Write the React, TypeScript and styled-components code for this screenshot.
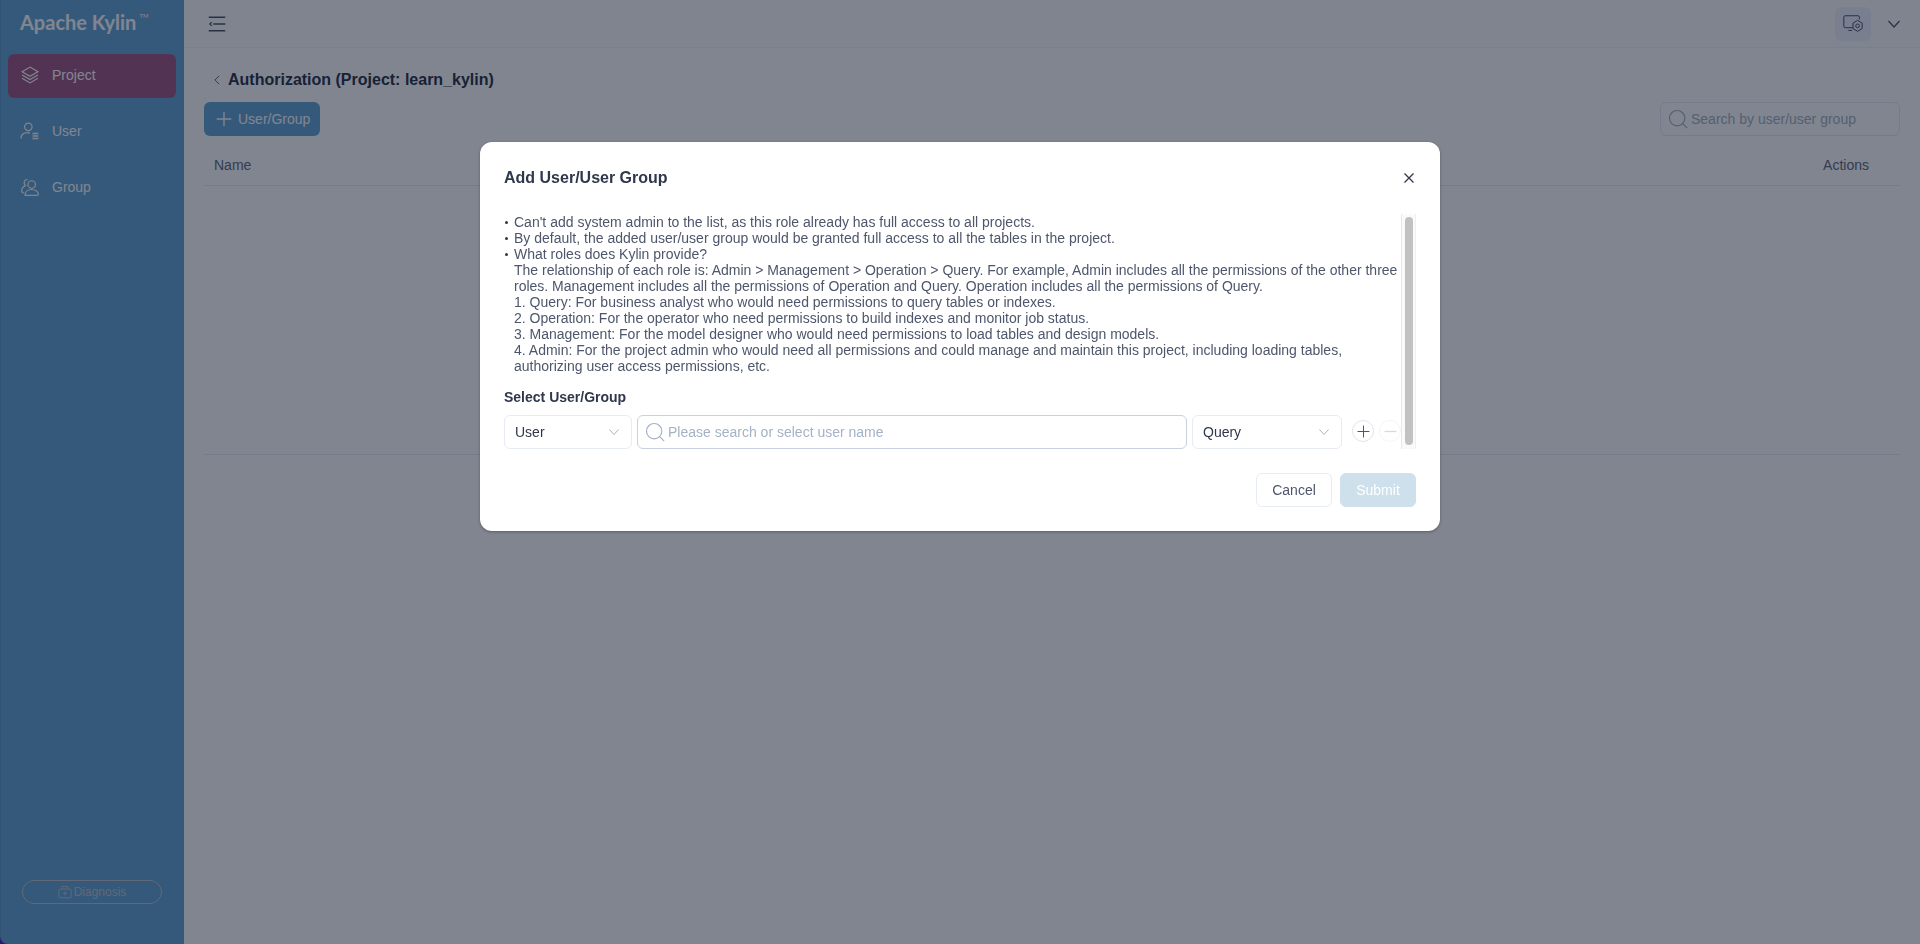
import type { ReactNode } from "react";
import styled, { createGlobalStyle } from "styled-components";

const GlobalStyle = createGlobalStyle`
  html, body {
    margin: 0;
    padding: 0;
    height: 100%;
    background: #ffffff;
    font-family: "Liberation Sans", Arial, sans-serif;
  }
  * {
    box-sizing: border-box;
  }
`;

const Layout = styled.div`
  display: flex;
  width: 100%;
  height: 944px;
  overflow: hidden;
  background: #4a2fc0;
`;

const Sidebar = styled.aside`
  width: 184px;
  flex: none;
  display: flex;
  flex-direction: column;
  background: #67a7d7;
  padding: 0 8px 40px;
  border-left: 1px solid #5f9ccb;
  border-bottom-left-radius: 8px;
`;

const Logo = styled.div`
  height: 54px;
  padding: 9px 0 0 11px;
  font-family: Lato, sans-serif;
  font-weight: 700;
  font-size: 20px;
  line-height: 26px;
  color: #ffffff;
  sup {
    font-size: 6px;
    font-weight: 400;
    line-height: 0;
    vertical-align: 12px;
    margin-left: 3px;
  }
`;

const Nav = styled.nav`
  display: flex;
  flex-direction: column;
  gap: 12px;
  margin-left: -1px;
`;

const NavItem = styled.div<{ $active?: boolean }>`
  height: 44px;
  display: flex;
  align-items: center;
  gap: 12px;
  padding: 0 12px 2px;
  border-radius: 6px;
  font-size: 14px;
  color: #ffffff;
  background: ${(p) => (p.$active ? "#a15b87" : "transparent")};
`;

const Diagnosis = styled.div`
  margin: auto 14px 0 13px;
  height: 24px;
  border: 1px solid #c0c4cc;
  border-radius: 12px;
  display: flex;
  align-items: center;
  justify-content: center;
  gap: 2px;
  font-size: 12px;
  color: #c0c4cc;
`;

const Main = styled.main`
  flex: 1;
  min-width: 0;
  display: flex;
  flex-direction: column;
  background: #ffffff;
`;

const TopBar = styled.header`
  height: 48px;
  flex: none;
  display: flex;
  align-items: center;
  justify-content: space-between;
  padding: 0 20px 0 24px;
  background: #fcfcfc;
  border-bottom: 1px solid #f0f2f5;
`;

const TopActions = styled.div`
  display: flex;
  align-items: center;
  gap: 17px;
`;

const SystemButton = styled.div`
  width: 36px;
  height: 34px;
  display: flex;
  align-items: center;
  justify-content: center;
  border-radius: 6px;
  background: #eff3ff;
`;

const Content = styled.section`
  padding: 0 20px;
`;

const TitleRow = styled.div`
  height: 54px;
  padding: 9px 0 0 8px;
  display: flex;
  align-items: center;
  gap: 6px;
`;

const PageTitle = styled.h1`
  margin: 0;
  font-size: 16px;
  font-weight: 700;
  color: #2f374c;
`;

const Toolbar = styled.div`
  display: flex;
  justify-content: space-between;
  align-items: center;
`;

const PrimaryButton = styled.div`
  width: 116px;
  height: 34px;
  padding: 0 0 0 12px;
  display: flex;
  align-items: center;
  gap: 6px;
  border-radius: 6px;
  background: #67a7d7;
  color: #ffffff;
  font-size: 14px;
`;

const SearchBox = styled.div<{ $width?: string; $strong?: boolean }>`
  height: 34px;
  display: flex;
  align-items: center;
  gap: 3px;
  padding: 0 7px;
  border: 1px solid ${(p) => (p.$strong ? "#c9d1e0" : "#e6ebf4")};
  border-radius: 6px;
  background: #ffffff;
  font-size: 14px;
  color: #a5b2c5;
  width: ${(p) => p.$width ?? "auto"};
  flex: ${(p) => (p.$width ? "none" : "1")};
`;

const TableHead = styled.div`
  height: 50px;
  padding: 9px 31px 0 10px;
  display: flex;
  justify-content: space-between;
  align-items: center;
  font-size: 14px;
  color: #636c83;
  border-bottom: 1px solid #e6ebf4;
`;

const TableBody = styled.div`
  height: 269px;
  border-bottom: 1px solid #e6ebf4;
`;

const Overlay = styled.div`
  position: fixed;
  inset: 0;
  background: rgba(3, 11, 31, 0.5);
`;

const Modal = styled.div`
  width: 960px;
  height: 389px;
  margin: 142px auto 0;
  padding: 24px 24px 0;
  background: #ffffff;
  border-radius: 12px;
  box-shadow: 0 1px 3px rgba(0, 0, 0, 0.3);
  display: flex;
  flex-direction: column;
`;

const ModalHead = styled.div`
  height: 48px;
  flex: none;
  padding-top: 1px;
  display: flex;
  justify-content: space-between;
  color: #2f374c;
`;

const ModalTitle = styled.h2`
  margin: 0;
  font-size: 16px;
  line-height: 22px;
  font-weight: 700;
`;

const Close = styled.div`
  width: 16px;
  height: 22px;
  margin-right: -1px;
  display: flex;
  align-items: center;
  justify-content: center;
`;

const ModalBody = styled.div`
  height: 235px;
  flex: none;
  display: flex;
`;

const BodyInner = styled.div`
  flex: 1;
  min-width: 0;
`;

const ScrollTrack = styled.div`
  width: 15px;
  flex: none;
  padding: 3px 2px 4px 3px;
  background: #fafafa;
  border-left: 1px solid #e8e8e8;
  border-right: 1px solid #f0f0f0;
`;

const ScrollThumb = styled.div`
  height: 100%;
  border-radius: 4px;
  background: #c1c1c1;
`;

const Tips = styled.ul`
  margin: 0;
  padding: 0 0 0 10px;
  list-style: none;
  font-size: 14px;
  line-height: 16px;
  color: #4e566b;
`;

const Tip = styled.li`
  position: relative;
  &::before {
    content: "";
    position: absolute;
    left: -9px;
    top: 7px;
    width: 3px;
    height: 3px;
    border-radius: 50%;
    background: #2f374c;
  }
`;

const FieldLabel = styled.div`
  margin-top: 15px;
  height: 26px;
  font-size: 14px;
  line-height: 16px;
  font-weight: 700;
  color: #2f374c;
`;

const FieldRow = styled.div`
  display: flex;
  align-items: center;
  gap: 5px;
  height: 34px;
`;

const Select = styled.div<{ $width: number }>`
  width: ${(p) => p.$width}px;
  height: 34px;
  flex: none;
  display: flex;
  align-items: center;
  justify-content: space-between;
  padding: 0 12px 0 10px;
  border: 1px solid #e6ebf4;
  border-radius: 6px;
  font-size: 14px;
  color: #2f374c;
`;

const RoundButton = styled.div<{ $disabled?: boolean }>`
  width: 22px;
  height: 22px;
  flex: none;
  display: flex;
  align-items: center;
  justify-content: center;
  border-radius: 50%;
  border: 1px solid ${(p) => (p.$disabled ? "#f5f6f9" : "#dfe4ee")};
  margin-left: ${(p) => (p.$disabled ? "0" : "5px")};
  margin-top: -2px;
`;

const ModalFoot = styled.div`
  display: flex;
  justify-content: flex-end;
  gap: 8px;
  margin-top: 24px;
`;

const FootButton = styled.div<{ $primary?: boolean }>`
  width: 76px;
  height: 34px;
  display: flex;
  align-items: center;
  justify-content: center;
  border-radius: 6px;
  font-size: 14px;
  color: ${(p) => (p.$primary ? "#ffffff" : "#4e566b")};
  background: ${(p) => (p.$primary ? "#cde0ec" : "#ffffff")};
  border: 1px solid ${(p) => (p.$primary ? "#cde0ec" : "#e6ebf4")};
`;

// weight is the stroke in real pixels, whatever the icon size
const Icon = ({ size, color, weight = 1, children }: { size: number; color: string; weight?: number; children: ReactNode }) => (
  <svg width={size} height={size} viewBox="0 0 24 24" fill="none" stroke={color} strokeWidth={(weight * 24) / size} style={{ flex: "none" }}>
    {children}
  </svg>
);

const SearchIcon = ({ color }: { color: string }) => (
  <Icon size={20} color={color} weight={1.2}>
    <circle cx="11" cy="11" r="9.2" />
    <path d="M17.6 17.6 23 23" />
  </Icon>
);

const Chevron = ({ color, size = 10 }: { color: string; size?: number }) => (
  <Icon size={size} color={color}>
    <path d="M1 6l11 12L23 6" />
  </Icon>
);

const Plus = ({ color, size, weight }: { color: string; size: number; weight?: number }) => (
  <Icon size={size} color={color} weight={weight}>
    <path d="M12 1v22M1 12h22" />
  </Icon>
);

function App() {
  return (
    <>
      <GlobalStyle />
      <Layout>
        <Sidebar>
          <Logo>
            Apache Kylin<sup>TM</sup>
          </Logo>
          <Nav>
            <NavItem $active>
              <Icon size={20} color="#ffffff" weight={1.2}>
                <path d="M12 2.500 21.500 8 12 13.500 2.500 8z" />
                <path d="M2.500 12 12 17.500 21.500 12" />
                <path d="M2.500 16 12 21.500 21.500 16" />
              </Icon>
              Project
            </NavItem>
            <NavItem>
              <Icon size={20} color="#ffffff" weight={1.2}>
                <circle cx="10" cy="7" r="4.500" />
                <path d="M1 21c.5-4.500 3.500-7 8-7 1.200 0 2.200.2 3 .5" />
                <path d="M15 15h7M15 18h7M15 21h7" strokeWidth="1.800" />
              </Icon>
              User
            </NavItem>
            <NavItem>
              <Icon size={20} color="#ffffff" weight={1.2}>
                <circle cx="14" cy="9" r="4.500" />
                <path d="M6 22c0-4 3-7 8-7s8 3 8 5.500c0 1-.7 1.500-1.500 1.500z" />
                <path d="M9 3C6.500 3 5 5 5 7c0 1.500.6 2.500 1.500 3.300C3.500 11.500 2 14 2 16.500c0 1.500 1 2.500 2.500 2.500" />
              </Icon>
              Group
            </NavItem>
          </Nav>
          <Diagnosis>
            <Icon size={14} color="#c0c4cc">
              <rect x="1.500" y="7" width="21" height="15" rx="2" />
              <path d="M7 7V2.500h10V7M12 11v7M8.500 14.500h7" />
            </Icon>
            Diagnosis
          </Diagnosis>
        </Sidebar>
        <Main>
          <TopBar>
            <Icon size={18} color="#4e566b" weight={1.300}>
              <path d="M1 3h22M7 12h16M1 21h22M5 9.500 2.500 12 5 14.500" />
            </Icon>
            <TopActions>
              <SystemButton>
                <Icon size={22} color="#4e566b">
                  <path d="M12 16H3.500A1.500 1.500 0 0 1 2 14.500V4.500A1.500 1.500 0 0 1 3.500 3h14A1.500 1.500 0 0 1 19 4.500V7" />
                  <path d="M7 19h4" />
                  <path d="M17 8l5 3v6l-5 3-5-3v-6z" />
                  <circle cx="17" cy="14" r="2" />
                </Icon>
              </SystemButton>
              <Icon size={12} color="#4e566b" weight={1.200}>
                <path d="M1 6l11 12L23 6" />
              </Icon>
            </TopActions>
          </TopBar>
          <Content>
            <TitleRow>
              <Icon size={10} color="#636c83">
                <path d="M17 2 7 12l10 10" />
              </Icon>
              <PageTitle>Authorization (Project: learn_kylin)</PageTitle>
            </TitleRow>
            <Toolbar>
              <PrimaryButton>
                <Plus color="#ffffff" size={16} weight={1.300} />
                User/Group
              </PrimaryButton>
              <SearchBox $width="240px">
                <SearchIcon color="#a5b2c5" />
                Search by user/user group
              </SearchBox>
            </Toolbar>
            <TableHead>
              <span>Name</span>
              <span>Actions</span>
            </TableHead>
            <TableBody />
          </Content>
        </Main>
      </Layout>
      <Overlay>
        <Modal>
          <ModalHead>
            <ModalTitle>Add User/User Group</ModalTitle>
            <Close>
              <Icon size={12} color="#2f374c" weight={1.300}>
                <path d="M3 3l18 18M21 3 3 21" />
              </Icon>
            </Close>
          </ModalHead>
          <ModalBody>
            <BodyInner>
              <Tips>
                <Tip>Can't add system admin to the list, as this role already has full access to all projects.</Tip>
                <Tip>By default, the added user/user group would be granted full access to all the tables in the project.</Tip>
                <Tip>
                  What roles does Kylin provide?
                  <br />
                  The relationship of each role is: Admin &gt; Management &gt; Operation &gt; Query. For example, Admin includes all the permissions of the other three roles. Management includes all the permissions of Operation and Query. Operation includes all the permissions of Query.
                  <br />
                  1. Query: For business analyst who would need permissions to query tables or indexes.
                  <br />
                  2. Operation: For the operator who need permissions to build indexes and monitor job status.
                  <br />
                  3. Management: For the model designer who would need permissions to load tables and design models.
                  <br />
                  4. Admin: For the project admin who would need all permissions and could manage and maintain this project, including loading tables, authorizing user access permissions, etc.
                </Tip>
              </Tips>
              <FieldLabel>Select User/Group</FieldLabel>
              <FieldRow>
                <Select $width={128}>
                  User
                  <Chevron color="#a5b2c5" />
                </Select>
                <SearchBox $strong>
                  <SearchIcon color="#a5b2c5" />
                  Please search or select user name
                </SearchBox>
                <Select $width={150}>
                  Query
                  <Chevron color="#a5b2c5" />
                </Select>
                <RoundButton>
                  <Plus color="#4e566b" size={13} />
                </RoundButton>
                <RoundButton $disabled>
                  <Icon size={13} color="#d5d9e0" weight={1.300}>
                    <path d="M1 12h22" />
                  </Icon>
                </RoundButton>
              </FieldRow>
            </BodyInner>
            <ScrollTrack>
              <ScrollThumb />
            </ScrollTrack>
          </ModalBody>
          <ModalFoot>
            <FootButton>Cancel</FootButton>
            <FootButton $primary>Submit</FootButton>
          </ModalFoot>
        </Modal>
      </Overlay>
    </>
  );
}

export default App;
